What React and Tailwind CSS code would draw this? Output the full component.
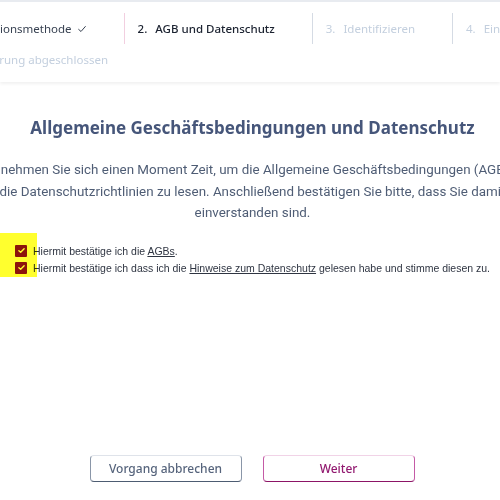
import React from "react";

const steps = [
  { n: "1.", label: "Identifikationsmethode", state: "done" },
  { n: "2.", label: "AGB und Datenschutz", state: "active" },
  { n: "3.", label: "Identifizieren", state: "todo" },
  { n: "4.", label: "Eingabe der Daten", state: "todo" },
  { n: "5.", label: "Registrierung abgeschlossen", state: "todo" },
];

function Check() {
  return (
    <span className="relative inline-flex h-[12px] w-[12px] shrink-0 items-center justify-center rounded-[1px] bg-[#8c1538]">
      <svg viewBox="0 0 12 12" className="h-[9px] w-[9px]" fill="none">
        <path d="M2.5 6.2 L4.9 8.4 L9.5 3.6" stroke="#ffffff" strokeWidth="1.8" strokeLinecap="round" strokeLinejoin="round" />
      </svg>
    </span>
  );
}

export default function App() {
  return (
    <div
      className="relative flex h-[500px] w-[500px] flex-col overflow-hidden bg-white"
      style={{ fontFamily: '"Noto Sans", "Open Sans", sans-serif' }}
    >
      {/* Stepper */}
      <header className="h-[82px] shrink-0 overflow-hidden border-t-2 border-[#e8ebf0] shadow-[0_2px_3px_rgba(0,0,0,0.06)]">
        <div className="ml-[-86px] flex w-[800px] flex-wrap pt-[11px] text-[11.5px]">
          {steps.map((s, i) => (
            <div
              key={s.n}
              className={`flex h-[31px] items-center pr-[37px] ${
                i === 4 ? "pl-[19px]" : "pl-[13px]"
              } ${i === 0 ? "" : "border-l"} ${
                i === 1 ? "border-[#f2cfe0]" : "border-[#d5dbe4]"
              } ${
                s.state === "done"
                  ? "text-[#374151]"
                  : s.state === "active"
                  ? "font-medium text-[#1b2230]"
                  : "text-[#c3cfde]"
              }`}
            >
              <span className="mr-[8px]">{s.n}</span>
              <span>{s.label}</span>
              {s.state === "done" && (
                <svg viewBox="0 0 12 12" className="ml-[5px] h-[10px] w-[10px]" fill="none">
                  <path d="M2 6.5 L4.8 9 L10 3" stroke="#374151" strokeWidth="1.2" strokeLinecap="round" strokeLinejoin="round" />
                </svg>
              )}
            </div>
          ))}
        </div>
      </header>

      {/* Content */}
      <main className="flex justify-center pl-[5px]">
        <div className="flex w-[700px] shrink-0 flex-col items-center pt-[34px] text-center">
          <h1 className="text-[17px] font-bold leading-[24px] text-[#46567a]">
            Allgemeine Geschäftsbedingungen und Datenschutz
          </h1>
          <p
            className="mt-[19px] text-[13.4px] leading-[21.5px] text-[#4f5d75]"
            style={{ fontFamily: 'Roboto, "Noto Sans", sans-serif' }}
          >
            Bitte nehmen Sie sich einen Moment Zeit, um die Allgemeine Geschäftsbedingungen (AGB) und
            <br />
            die Datenschutzrichtlinien zu lesen. Anschließend bestätigen Sie bitte, dass Sie damit
            <br />
            einverstanden sind.
          </p>
        </div>
      </main>

      <div
        className="relative mt-[20px] flex flex-col gap-[3px] pl-[15px] text-[10.5px] leading-[14px] text-[#2f3542]"
        style={{ fontFamily: '"Liberation Sans", Arial, sans-serif' }}
      >
        <label className="flex items-center gap-[6px]">
          <Check />
          <span>
            Hiermit bestätige ich die <span className="underline">AGBs</span>.
          </span>
        </label>
        <label className="flex items-center gap-[6px]">
          <Check />
          <span className="whitespace-nowrap">
            Hiermit bestätige ich dass ich die{" "}
            <span className="underline">Hinweise zum Datenschutz</span> gelesen habe und stimme diesen zu.
          </span>
        </label>
        <div className="pointer-events-none absolute left-0 top-[-11px] h-[44px] w-[37px] bg-[#ffff2e] mix-blend-multiply" />
      </div>

      {/* Buttons */}
      <div className="mt-auto flex justify-center gap-[21px] pb-[18px] pl-[4px] text-[12px] font-medium">
        <button className="h-[27px] w-[152px] rounded-[4px] border border-t-[#dfe3ea] border-x-[#8a96a8] border-b-[#4d5c72] text-[#56647c]">
          Vorgang abbrechen
        </button>
        <button className="h-[27px] w-[152px] rounded-[4px] border border-t-[#f1d3e7] border-x-[#c45aa6] border-b-[#8c1466] text-[#921a70]">
          Weiter
        </button>
      </div>
    </div>
  );
}
